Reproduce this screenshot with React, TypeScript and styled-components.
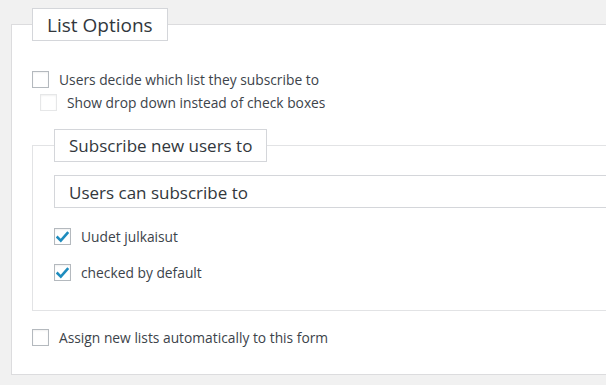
import React from 'react';
import styled, { createGlobalStyle } from 'styled-components';

const GlobalStyle = createGlobalStyle`
	html, body {
		margin: 0;
		padding: 0;
		background: #f1f1f1;
		overflow: hidden;
	}
	body {
		font-family: "Open Sans", "Noto Sans", sans-serif;
		color: #32373c;
	}
`;

const Page = styled.div`
	width: 606px;
	height: 385px;
	padding: 0 0 0 11px;
	box-sizing: border-box;
	overflow: hidden;
`;

const Panel = styled.fieldset`
	margin: 8px 0 0 0;
	width: 680px;
	min-width: 0;
	padding: 0 20px 28px 20px;
	border: 1px solid #dcdcde;
	background: #fff;
	box-sizing: border-box;
`;

const Legend = styled.legend<{ $size: number; $drop: number }>`
	padding: ${p => p.$drop}px 14px 0 14px;
	height: 33px;
	line-height: ${p => 31 - p.$drop}px;
	box-sizing: border-box;
	border: 1px solid #d4d6da;
	background: #fff;
	font-size: ${p => p.$size}px;
	color: #32373c;
`;

const InnerPanel = styled.fieldset`
	margin: 18px 0 0 0;
	min-width: 0;
	padding: 0 21px 29px 21px;
	border: 1px solid #e2e3e5;
	border-right: none;
	box-sizing: border-box;
`;

const Row = styled.label<{ $indent?: number; $gap: number }>`
	display: flex;
	align-items: center;
	gap: 10px;
	margin-left: ${p => p.$indent || 0}px;
	margin-top: ${p => p.$gap}px;
	font-size: 13.8px;
	line-height: 17px;
	color: #3c434a;
`;

const Box = styled.span<{ $muted?: boolean }>`
	display: inline-flex;
	align-items: center;
	justify-content: center;
	flex: none;
	width: 17px;
	height: 17px;
	box-sizing: border-box;
	border: 1px solid ${p => (p.$muted ? '#e6e7e8' : '#b4b9be')};
	background: #fff;
	box-shadow: inset 0 1px 2px rgba(0, 0, 0, 0.06);
`;

const Select = styled.div`
	margin-top: 13px;
	height: 33px;
	padding: 2px 14px 0 14px;
	line-height: 29px;
	box-sizing: border-box;
	border: 1px solid #d4d6da;
	border-right: none;
	font-size: 17px;
	color: #32373c;
`;

function Check({ checked, muted }: { checked?: boolean; muted?: boolean }) {
	return (
		<Box $muted={muted}>
			{checked && (
				<svg width="13" height="12" viewBox="0 0 13 12">
					<path d="M1.6 6.4 L4.8 9.6 L11.4 2" fill="none" stroke="#1e8cbe" strokeWidth="2.6" strokeLinecap="square" />
				</svg>
			)}
		</Box>
	);
}

export default function App() {
	return (
		<Page>
			<GlobalStyle />
			<Panel>
				<Legend $size={19} $drop={2}>List Options</Legend>
				<Row $gap={30}>
					<Check />
					Users decide which list they subscribe to
				</Row>
				<Row $gap={6} $indent={8}>
					<Check muted />
					Show drop down instead of check boxes
				</Row>
				<InnerPanel>
					<Legend $size={17} $drop={1}>Subscribe new users to</Legend>
					<Select>Users can subscribe to</Select>
					<Row $gap={20}>
						<Check checked />
						Uudet julkaisut
					</Row>
					<Row $gap={19}>
						<Check checked />
						checked by default
					</Row>
				</InnerPanel>
				<Row $gap={18}>
					<Check />
					Assign new lists automatically to this form
				</Row>
			</Panel>
		</Page>
	);
}
